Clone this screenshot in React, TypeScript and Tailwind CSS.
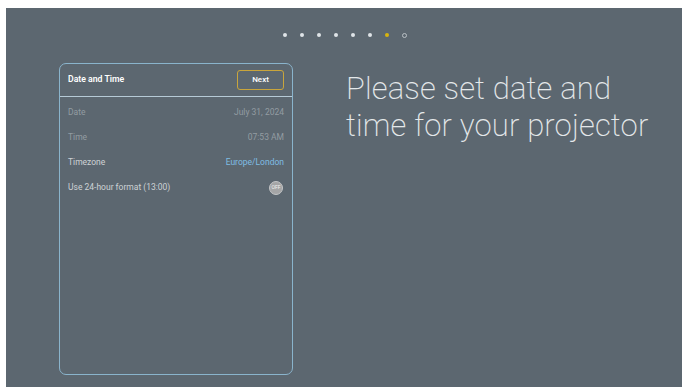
import React from "react";

const rows = [
  { label: "Date", value: "July 31, 2024", dim: true },
  { label: "Time", value: "07:53 AM", dim: true },
  { label: "Timezone", value: "Europe/London", link: true },
];

function Dots() {
  return (
    <div className="flex items-center justify-center gap-[13px] pl-[1px] h-[4px]">
      {[0, 1, 2, 3, 4, 5].map((i) => (
        <span key={i} className="w-[4px] h-[4px] rounded-full bg-[#dfe4e8]" />
      ))}
      <span className="w-[4px] h-[4px] rounded-full bg-[#d8b40c]" />
      <span className="w-[5px] h-[5px] rounded-full border border-[#b9c0c5]" />
    </div>
  );
}

export default function App() {
  return (
    <div className="w-[682px] h-[387px] bg-white pt-[8px] pl-[6px] overflow-hidden" style={{ fontFamily: "Roboto, 'Noto Sans', sans-serif" }}>
      <div className="w-[676px] h-[379px] bg-[#5c6770] flex flex-col">
        <div className="pt-[25px]">
          <Dots />
        </div>
        <div className="flex pt-[26px]">
          <div className="ml-[53px] w-[234px] h-[312px] rounded-[7px] border-[1.5px] border-[#8ab4cc] flex flex-col">
            <div className="flex items-center justify-between h-[33px] pl-[8px] pr-[8px] border-b-[1.5px] border-[#b6cad6]">
              <span className="text-[8.7px] font-semibold text-white">Date and Time</span>
              <span className="w-[47px] h-[20px] rounded-[3px] border-[1.5px] border-[#c9a53c] flex items-center justify-center text-[8px] font-medium text-white">
                Next
              </span>
            </div>
            <div className="flex flex-col px-[8px] pt-[3px]">
              {rows.map((r) => (
                <div key={r.label} className="flex items-center justify-between h-[25px] text-[8.5px]">
                  <span className={r.dim ? "text-[#939ca2]" : "text-[#cdd2d5]"}>{r.label}</span>
                  <span className={r.dim ? "text-[#939ca2]" : r.link ? "text-[#7fbde3]" : "text-[#cdd2d5]"}>
                    {r.value}
                  </span>
                </div>
              ))}
              <div className="flex items-center justify-between h-[25px] text-[8.5px]">
                <span className="text-[#cdd2d5]">Use 24-hour format (13:00)</span>
                <span className="w-[14px] h-[14px] rounded-full bg-[#a4a5a6] border border-[#c4c6c8] flex items-center justify-center text-[5px] leading-none text-[#f2f2f2] mr-[1px]">
                  OFF
                </span>
              </div>
            </div>
          </div>
          <div className="ml-[53px] pt-[7px] text-[31px] leading-[37px] font-extralight text-[#e4e8ea] tracking-[0.15px]">
            <div>Please set date and</div>
            <div>time for your projector</div>
          </div>
        </div>
      </div>
    </div>
  );
}
